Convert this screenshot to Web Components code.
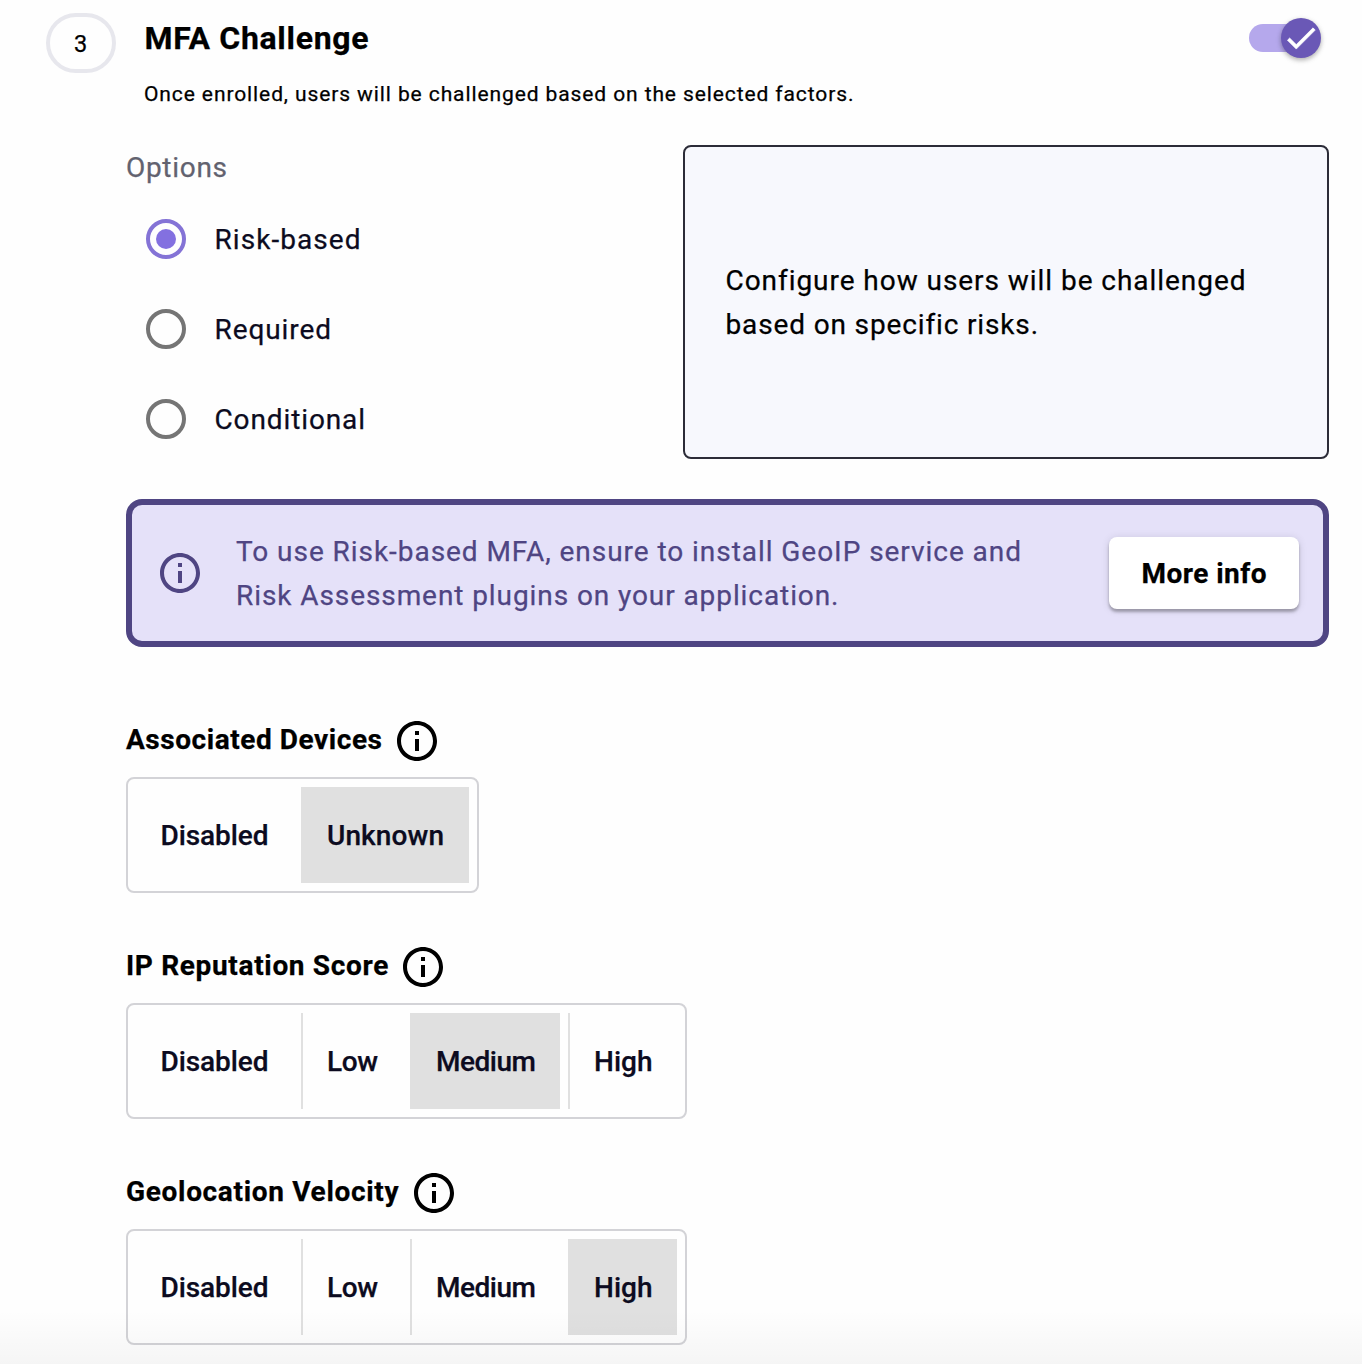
<!DOCTYPE html>
<html lang="en">
<head>
<meta charset="utf-8">
<title>MFA Challenge</title>
<style>
  body { margin: 0; background: #fefefe; font-family: Roboto, "Liberation Sans", sans-serif; color: #000; }
</style>
</head>
<body>
<mfa-page></mfa-page>
<script>
const define = (name, html, init) => {
  const tpl = document.createElement('template');
  tpl.innerHTML = html;
  customElements.define(name, class extends HTMLElement {
    constructor() {
      super();
      this.attachShadow({ mode: 'open' }).append(tpl.content.cloneNode(true));
    }
    connectedCallback() { if (init) init(this, this.shadowRoot); }
  });
};

/* One line of text, tracked so that its glyphs span the given measure. */
define('tracked-text', `
  <style>:host { display: block; white-space: nowrap; } span { display: inline-block; -webkit-text-stroke: .25px currentColor; }</style>
  <span><slot></slot></span>`, (el, root) => {
  const span = root.querySelector('span');
  const measure = Number(el.getAttribute('measure'));
  const count = el.textContent.length;
  span.style.letterSpacing = '0px';
  const natural = span.getBoundingClientRect().width;
  const tracking = (measure - natural) / (count - 1);
  span.style.letterSpacing = tracking.toFixed(3) + 'px';
  span.style.marginRight = (-tracking).toFixed(3) + 'px';
});

define('info-icon', `
  <style>:host { display: block; width: 40px; height: 40px; flex: none; } svg { display: block; }</style>
  <svg width="40" height="40" viewBox="2 2 20 20" fill="currentColor"><path d="M11 7h2v2h-2zm0 4h2v6h-2zm1-9C6.48 2 2 6.48 2 12s4.48 10 10 10 10-4.48 10-10S17.52 2 12 2zm0 18c-4.41 0-8-3.59-8-8s3.59-8 8-8 8 3.59 8 8-3.59 8-8 8z"/></svg>`);

define('step-badge', `
  <style>:host { display: flex; align-items: center; justify-content: center; box-sizing: border-box; width: 70px; height: 60px; flex: none;
    border: 4px solid #e7e7ed; border-radius: 30px; font-size: 23.5px; line-height: 30px; padding: 1px 1px 0 0; -webkit-text-stroke: .25px currentColor; }</style>
  <slot></slot>`);

define('toggle-switch', `
  <style>
    :host { display: flex; align-items: center; width: 72px; height: 40px; flex: none; }
    .track { width: 68px; height: 28px; border-radius: 14px; background: #b5a8ec; flex: none; }
    .knob { width: 40px; height: 40px; margin-left: -36px; border-radius: 50%; background: #6a58b6; flex: none;
      display: flex; align-items: center; justify-content: center;
      box-shadow: 0 2px 4px rgba(0,0,0,.22), 0 2px 6px rgba(0,0,0,.12); }
  </style>
  <div class="track"></div>
  <div class="knob"><svg width="38" height="38" viewBox="0 0 24 24" fill="#fff" stroke="#fff" stroke-width=".4"><path d="M9 16.17L4.83 12l-1.42 1.41L9 19 21 7l-1.41-1.41z"/></svg></div>`);

define('radio-option', `
  <style>
    :host { display: flex; align-items: center; height: 90px; gap: 28.5px; font-size: 28px; line-height: 44px; color: #0c0b20; }
    .ring { box-sizing: border-box; width: 40px; height: 40px; border: 4px solid #757575; border-radius: 50%;
      display: flex; align-items: center; justify-content: center; }
    :host([checked]) .ring { border-color: #8473d6; }
    :host([checked]) .ring::after { content: ""; width: 20px; height: 20px; border-radius: 50%; background: #8370e0; }
    ::slotted(*) { padding-top: 2px; }
  </style>
  <div class="ring"></div><slot></slot>`);

define('hint-card', `
  <style>:host { display: flex; flex-direction: column; justify-content: center; box-sizing: border-box; width: 646px; height: 314px;
    padding: 2px 0 0 40.5px; border: 2px solid #2c2c38; border-radius: 8px; background: #f7f8fd; font-size: 28px; line-height: 44px; }</style>
  <slot></slot>`);

define('action-button', `
  <style>
    :host { display: block; flex: none; }
    button { all: unset; box-sizing: border-box; width: 190px; height: 72px; display: flex; align-items: center; justify-content: center;
      padding-top: 2px; border-radius: 8px; background: #fff; color: #000; font-size: 28px; font-weight: 700; line-height: 44px;
      box-shadow: 0 3px 3px rgba(0,0,0,.28), 0 1px 8px rgba(0,0,0,.12); }
  </style>
  <button><slot></slot></button>`);

define('alert-banner', `
  <style>
    :host { display: flex; align-items: center; box-sizing: border-box; height: 148px; padding: 0 24px 0 28px;
      border: 6px solid #4f4583; border-radius: 16px; background: #e5e1f9; color: #4f4583; }
    .text { flex: 1; padding: 2px 0 0 36px; font-size: 28px; line-height: 44px; }
  </style>
  <info-icon></info-icon>
  <div class="text"><slot></slot></div>
  <slot name="action"></slot>`);

define('choice-cell', `
  <style>
    :host { display: flex; align-items: center; box-sizing: border-box; height: 96px; padding: 2px 0 0 24px; border-left: 2px solid #e0e0e0;
      font-size: 28px; font-weight: 500; line-height: 44px; color: #0c0b20; }
    :host(:first-of-type) { border-color: transparent; padding-left: 22.5px; }
    :host([selected]) { background: #e0e0e0; }
  </style>
  <slot></slot>`);

define('choice-group', `
  <style>
    :host { display: block; }
    .head { display: flex; height: 40px; gap: 15px; font-size: 28px; font-weight: 700; line-height: 38px; }
    .cells { display: flex; gap: 8px; box-sizing: border-box; width: fit-content; height: 116px; margin-top: 16px;
      padding: 8px; border: 2px solid #d3d3d7; border-radius: 8px; }
  </style>
  <div class="head"><slot name="label"></slot><info-icon></info-icon></div>
  <div class="cells"><slot></slot></div>`);

define('mfa-page', `
  <style>
    :host { display: block; position: relative; box-sizing: border-box; height: 1364px; padding: 13px 33px 0 46px; overflow: hidden; }
    header { display: flex; align-items: flex-start; height: 132px; }
    .titles { flex: 1; padding-left: 28px; }
    .title { font-size: 32px; font-weight: 700; line-height: 50px; padding-left: .5px; }
    .sub { font-size: 21px; line-height: 30px; margin-top: 16px; }
    toggle-switch { margin: 5px 8px 0 0; }
    main { padding-left: 80px; }
    .row { display: flex; justify-content: space-between; height: 314px; }
    .label { box-sizing: border-box; font-size: 28px; line-height: 44px; color: #62626f; height: 49px; padding-top: 1px; }
    .radios { padding-left: 20px; }
    alert-banner { margin-top: 40px; }
    .groups { display: flex; flex-direction: column; gap: 54px; margin-top: 74px; }
    .fade { position: absolute; left: 0; right: 0; bottom: 0; height: 54px; pointer-events: none;
      background: linear-gradient(rgba(0,0,0,0), rgba(0,0,0,.035)); }
  </style>
  <header>
    <step-badge>3</step-badge>
    <div class="titles">
      <tracked-text class="title" measure="224">MFA Challenge</tracked-text>
      <tracked-text class="sub" measure="709.5">Once enrolled, users will be challenged based on the selected factors.</tracked-text>
    </div>
    <toggle-switch></toggle-switch>
  </header>
  <main>
    <div class="row">
      <div>
        <tracked-text class="label" measure="101">Options</tracked-text>
        <div class="radios">
          <radio-option checked><tracked-text measure="146">Risk-based</tracked-text></radio-option>
          <radio-option><tracked-text measure="116.5">Required</tracked-text></radio-option>
          <radio-option><tracked-text measure="150.5">Conditional</tracked-text></radio-option>
        </div>
      </div>
      <hint-card>
        <tracked-text measure="519">Configure how users will be challenged</tracked-text>
        <tracked-text measure="311.5">based on specific risks.</tracked-text>
      </hint-card>
    </div>
    <alert-banner>
      <tracked-text measure="785">To use Risk-based MFA, ensure to install GeoIP service and</tracked-text>
      <tracked-text measure="602.5">Risk Assessment plugins on your application.</tracked-text>
      <action-button slot="action"><tracked-text measure="125">More info</tracked-text></action-button>
    </alert-banner>
    <div class="groups">
      <choice-group>
        <tracked-text slot="label" measure="256">Associated Devices</tracked-text>
        <choice-cell style="width:157px"><tracked-text measure="108">Disabled</tracked-text></choice-cell>
        <choice-cell style="width:168px" selected><tracked-text measure="117">Unknown</tracked-text></choice-cell>
      </choice-group>
      <choice-group>
        <tracked-text slot="label" measure="262.3">IP Reputation Score</tracked-text>
        <choice-cell style="width:157px"><tracked-text measure="108">Disabled</tracked-text></choice-cell>
        <choice-cell style="width:101px"><tracked-text measure="51">Low</tracked-text></choice-cell>
        <choice-cell style="width:150px" selected><tracked-text measure="100">Medium</tracked-text></choice-cell>
        <choice-cell style="width:109px"><tracked-text measure="58.5">High</tracked-text></choice-cell>
      </choice-group>
      <choice-group>
        <tracked-text slot="label" measure="272.6">Geolocation Velocity</tracked-text>
        <choice-cell style="width:157px"><tracked-text measure="108">Disabled</tracked-text></choice-cell>
        <choice-cell style="width:101px"><tracked-text measure="51">Low</tracked-text></choice-cell>
        <choice-cell style="width:150px"><tracked-text measure="100">Medium</tracked-text></choice-cell>
        <choice-cell style="width:109px" selected><tracked-text measure="58.5">High</tracked-text></choice-cell>
      </choice-group>
    </div>
  </main>
  <div class="fade"></div>`);
</script>
</body>
</html>
